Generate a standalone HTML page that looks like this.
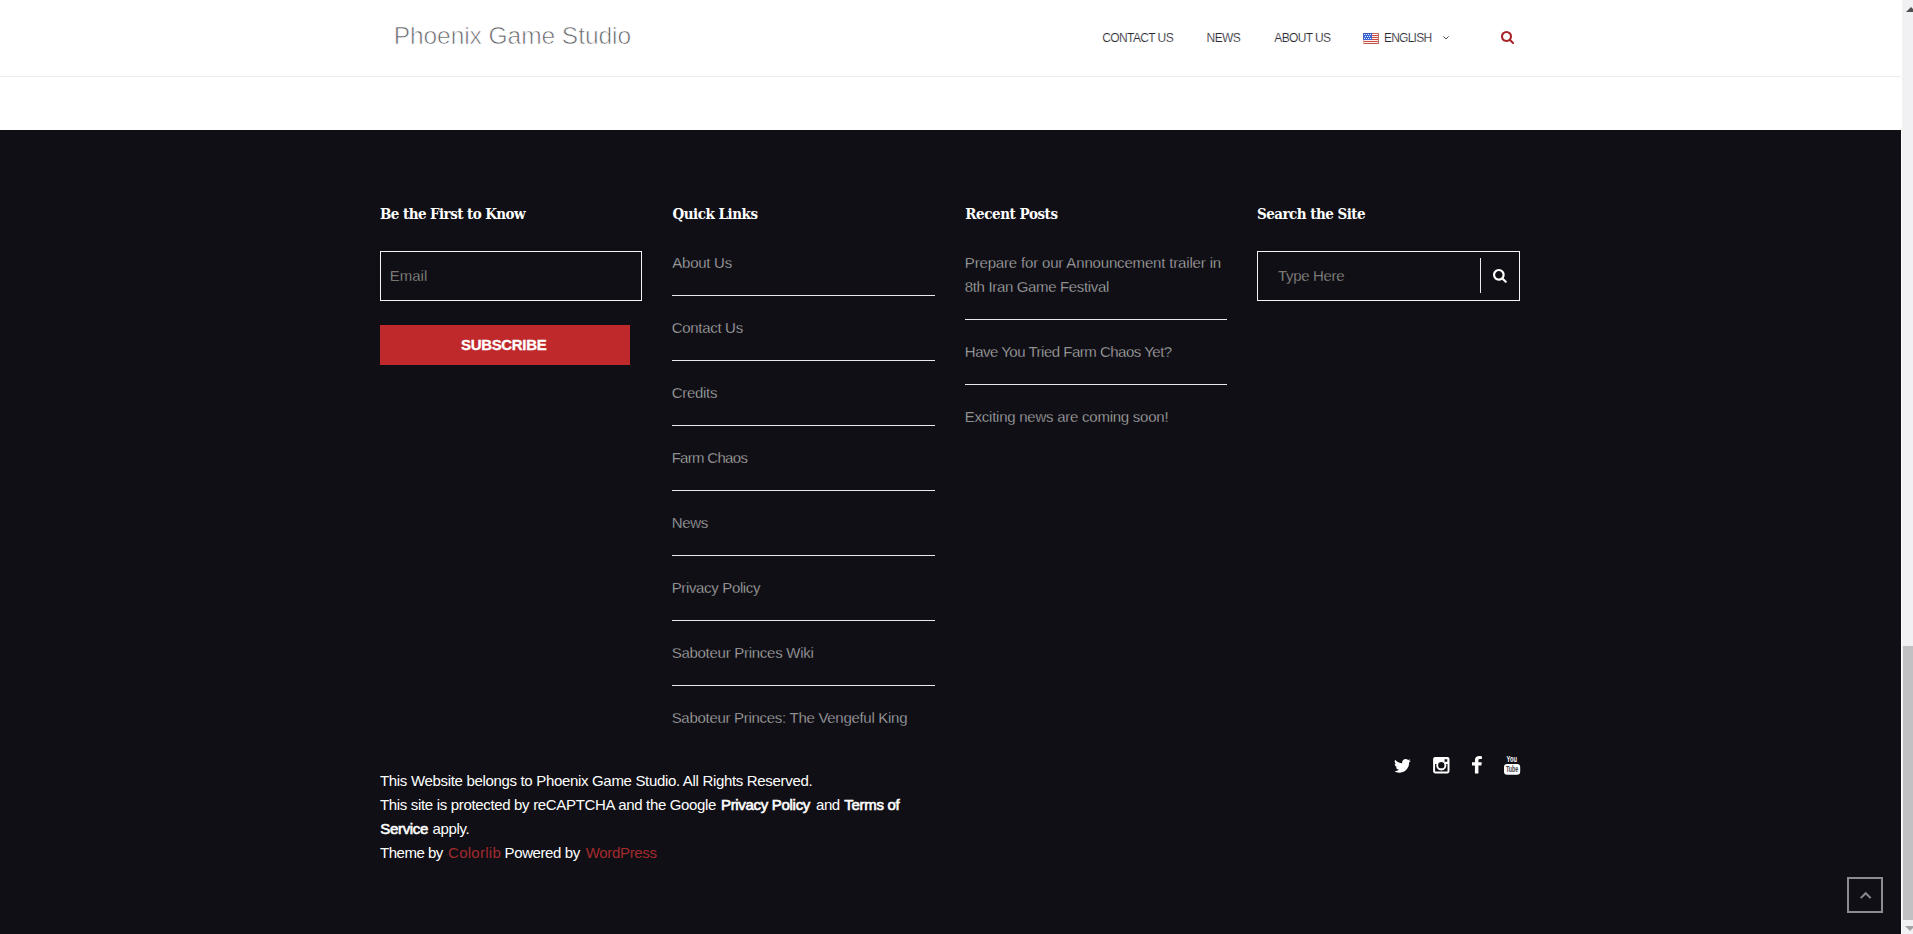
<!DOCTYPE html>
<html lang="en">
<head>
<meta charset="utf-8">
<title>Phoenix Game Studio</title>
<style>
*{box-sizing:border-box;margin:0;padding:0}
html,body{width:1913px;height:934px;overflow:hidden;background:#fff}
body{position:relative;font-family:"Liberation Sans",sans-serif;font-size:15px;color:#fff}
a{color:inherit;text-decoration:none}
.abs{position:absolute}
.tx{position:absolute;white-space:nowrap;display:block}
#header{position:absolute;left:0;top:0;width:1901px;height:77px;background:#fff;border-bottom:1px solid #ebebee}
.logo{font-size:24.5px;line-height:32px;color:#626266;-webkit-text-stroke:0.7px #fff}
.nav{font-size:12px;line-height:16px;color:#2a2a32;text-transform:uppercase;-webkit-text-stroke:0.15px #fff}
#footer{position:absolute;left:0;top:130px;width:1901px;height:804px;background:#100f15}
.wt{font-family:"DejaVu Serif Condensed","DejaVu Serif","Liberation Serif",serif;font-weight:bold;font-size:15px;line-height:20px;color:#fff}
.li{font-size:15px;line-height:24px;color:#bababa;-webkit-text-stroke:0.35px #100f15}
.ph{font-size:15px;line-height:24px;color:#989892;-webkit-text-stroke:0.3px #100f15}
.sub{font-weight:bold;font-size:15px;line-height:20px;color:#fff;-webkit-text-stroke:0.3px #fff}
.cp{font-size:15px;line-height:24px;color:#fff}
.b{font-weight:normal;-webkit-text-stroke:0.6px #fff}
.r{color:#a32a2e}
.hr{position:absolute;height:1px;width:263px;background:#e8e8ee}
#email{left:380px;top:121px;width:262px;height:50px;border:1px solid #f4f4f6}
#subbtn{left:380px;top:195px;width:250px;height:40px;background:#c0292b}
#search{left:1257px;top:121px;width:263px;height:50px;border:1px solid #f4f4f6}
#search i{position:absolute;left:222px;top:6px;width:1px;height:35px;background:#e8e8ee}
svg{position:absolute;display:block;overflow:visible}
#totop{left:1847px;top:747px;width:36px;height:36px;border:2px solid #8b8b92}
#sbar{position:absolute;left:1901px;top:0;width:12px;height:934px;background:#f1f1f3;border-left:1px solid #fff}
#sbar .th{position:absolute;left:1px;top:646px;width:11px;height:274px;background:#c1c1c4}
</style>
</head>
<body>
<header id="header">
<a id="logo" class="tx logo" style="left:393.64px;top:19.5px;letter-spacing:-0.050px">Phoenix Game Studio</a>
<a id="n1" class="tx nav" style="left:1102.20px;top:30px;letter-spacing:-0.600px">CONTACT US</a>
<a id="n2" class="tx nav" style="left:1206.60px;top:30px;letter-spacing:-0.600px">NEWS</a>
<a id="n3" class="tx nav" style="left:1274.33px;top:30px;letter-spacing:-0.643px">ABOUT US</a>
<a id="n4" class="tx nav" style="left:1383.90px;top:30px;letter-spacing:-0.750px">ENGLISH</a>
<!-- header icons -->
<svg style="left:1363px;top:33px" width="16" height="11" viewBox="0 0 16 11" shape-rendering="crispEdges">
<rect width="16" height="11" fill="#fdf1ee"/>
<g fill="#cf4a40"><rect x="9" y="2" width="7" height="1"/><rect x="9" y="4" width="7" height="1"/><rect x="9" y="6" width="7" height="1"/><rect x="0" y="8" width="16" height="1"/></g>
<rect x="9" y="0" width="7" height="1" fill="#c96a5c"/>
<rect x="0" y="10" width="16" height="1" fill="#b9584a"/>
<rect x="15" y="0" width="1" height="11" fill="#bd7560"/>
<rect x="0" y="7" width="1" height="4" fill="#e3a9a0"/>
<rect x="0" y="0" width="9" height="7" fill="#3f68d6"/>
<rect x="0" y="0" width="9" height="1" fill="#3a56ad"/>
<rect x="0" y="0" width="1" height="7" fill="#4a63b8"/>
<g fill="#d6efff"><rect x="1" y="1" width="1" height="1"/><rect x="3" y="1" width="1" height="1"/><rect x="5" y="1" width="1" height="1"/><rect x="7" y="1" width="1" height="1"/><rect x="2" y="3" width="1" height="1"/><rect x="4" y="3" width="1" height="1"/><rect x="6" y="3" width="1" height="1"/><rect x="1" y="5" width="1" height="1"/><rect x="3" y="5" width="1" height="1"/><rect x="5" y="5" width="1" height="1"/><rect x="7" y="5" width="1" height="1"/></g>
</svg>
<svg style="left:1443px;top:36px" width="6" height="4" viewBox="0 0 6 4"><path d="M0.4 0.4 L3 3 L5.6 0.4" fill="none" stroke="#4a4a52" stroke-width="1"/></svg>
<svg style="left:1501.3px;top:30.9px" width="13" height="13" viewBox="0 -1408 1664 1664"><path fill="#a82428" transform="scale(1,-1)" d="M1020.5 387.5Q1152 519 1152.0 704.0Q1152 889 1020.5 1020.5Q889 1152 704.0 1152.0Q519 1152 387.5 1020.5Q256 889 256.0 704.0Q256 519 387.5 387.5Q519 256 704.0 256.0Q889 256 1020.5 387.5ZM1664 -128Q1664 -180 1626.0 -218.0Q1588 -256 1536 -256Q1482 -256 1446 -218L1103 124Q924 0 704 0Q561 0 430.5 55.5Q300 111 205.5 205.5Q111 300 55.5 430.5Q0 561 0.0 704.0Q0 847 55.5 977.5Q111 1108 205.5 1202.5Q300 1297 430.5 1352.5Q561 1408 704.0 1408.0Q847 1408 977.5 1352.5Q1108 1297 1202.5 1202.5Q1297 1108 1352.5 977.5Q1408 847 1408 704Q1408 484 1284 305L1627 -38Q1664 -75 1664 -128Z"/></svg>

</header>

<footer id="footer">
<!-- footer widgets -->
<div id="email" class="abs"></div>
<div id="subbtn" class="abs"></div>
<div class="hr" style="left:672px;top:165px"></div>
<div class="hr" style="left:672px;top:230px"></div>
<div class="hr" style="left:672px;top:295px"></div>
<div class="hr" style="left:672px;top:360px"></div>
<div class="hr" style="left:672px;top:425px"></div>
<div class="hr" style="left:672px;top:490px"></div>
<div class="hr" style="left:672px;top:555px"></div>
<div class="hr" style="left:965px;top:189px;width:262px"></div>
<div class="hr" style="left:965px;top:254px;width:262px"></div>

<div id="search" class="abs"><i></i></div>
<svg style="left:1492.8px;top:138.6px" width="13.8" height="13.8" viewBox="0 -1408 1664 1664"><path fill="#fff" transform="scale(1,-1)" d="M1020.5 387.5Q1152 519 1152.0 704.0Q1152 889 1020.5 1020.5Q889 1152 704.0 1152.0Q519 1152 387.5 1020.5Q256 889 256.0 704.0Q256 519 387.5 387.5Q519 256 704.0 256.0Q889 256 1020.5 387.5ZM1664 -128Q1664 -180 1626.0 -218.0Q1588 -256 1536 -256Q1482 -256 1446 -218L1103 124Q924 0 704 0Q561 0 430.5 55.5Q300 111 205.5 205.5Q111 300 55.5 430.5Q0 561 0.0 704.0Q0 847 55.5 977.5Q111 1108 205.5 1202.5Q300 1297 430.5 1352.5Q561 1408 704.0 1408.0Q847 1408 977.5 1352.5Q1108 1297 1202.5 1202.5Q1297 1108 1352.5 977.5Q1408 847 1408 704Q1408 484 1284 305L1627 -38Q1664 -75 1664 -128Z"/></svg>

<h3 id="t1" class="tx wt" style="left:380.00px;top:73.5px;letter-spacing:-0.568px">Be the First to Know</h3>
<h3 id="t2" class="tx wt" style="left:672.50px;top:73.5px;letter-spacing:-0.477px">Quick Links</h3>
<h3 id="t3" class="tx wt" style="left:965.33px;top:73.5px;letter-spacing:-0.442px">Recent Posts</h3>
<h3 id="t4" class="tx wt" style="left:1256.90px;top:73.5px;letter-spacing:-0.514px">Search the Site</h3>
<span id="em" class="tx ph" style="left:389.72px;top:134px;letter-spacing:0.000px">Email</span>
<span id="sb" class="tx sub" style="left:461.00px;top:205px;letter-spacing:-0.338px">SUBSCRIBE</span>
<a id="q1" class="tx li" style="left:672.30px;top:121px;letter-spacing:-0.257px">About Us</a>
<a id="q2" class="tx li" style="left:671.67px;top:186px;letter-spacing:-0.300px">Contact Us</a>
<a id="q3" class="tx li" style="left:671.67px;top:251px;letter-spacing:-0.285px">Credits</a>
<a id="q4" class="tx li" style="left:671.67px;top:316px;letter-spacing:-0.700px">Farm Chaos</a>
<a id="q5" class="tx li" style="left:671.67px;top:381px;letter-spacing:-0.300px">News</a>
<a id="q6" class="tx li" style="left:671.67px;top:446px;letter-spacing:-0.346px">Privacy Policy</a>
<a id="q7" class="tx li" style="left:671.67px;top:511px;letter-spacing:-0.270px">Saboteur Princes Wiki</a>
<a id="q8" class="tx li" style="left:671.67px;top:576px;letter-spacing:-0.291px">Saboteur Princes: The Vengeful King</a>
<a id="r1" class="tx li" style="left:964.80px;top:121px;letter-spacing:-0.166px">Prepare for our Announcement trailer in</a>
<a id="r1b" class="tx li" style="left:964.80px;top:145px;letter-spacing:-0.343px">8th Iran Game Festival</a>
<a id="r2" class="tx li" style="left:964.80px;top:210px;letter-spacing:-0.497px">Have You Tried Farm Chaos Yet?</a>
<a id="r3" class="tx li" style="left:964.80px;top:275px;letter-spacing:-0.248px">Exciting news are coming soon!</a>
<span id="th" class="tx ph" style="left:1278.00px;top:134px;letter-spacing:-0.337px">Type Here</span>
<span id="c1" class="tx cp" style="left:380.00px;top:639px;letter-spacing:-0.323px">This Website belongs to Phoenix Game Studio. All Rights Reserved.</span>
<span id="c2a" class="tx cp" style="left:380.00px;top:663px;letter-spacing:-0.331px">This site is protected by reCAPTCHA and the Google</span>
<b id="c2b" class="tx cp b" style="left:720.94px;top:663px;letter-spacing:-0.305px">Privacy Policy</b>
<span id="c2c" class="tx cp" style="left:816.00px;top:663px;letter-spacing:-0.450px">and</span>
<b id="c2d" class="tx cp b" style="left:844.34px;top:663px;letter-spacing:-0.321px">Terms of</b>
<b id="c3a" class="tx cp b" style="left:380.33px;top:687px;letter-spacing:-0.345px">Service</b>
<span id="c3b" class="tx cp" style="left:432.50px;top:687px;letter-spacing:-0.360px">apply.</span>
<span id="c4a" class="tx cp" style="left:380.00px;top:711px;letter-spacing:-0.489px">Theme by</span>
<a id="c4b" class="tx cp r" style="left:448.10px;top:711px;letter-spacing:0.257px">Colorlib</a>
<span id="c4c" class="tx cp" style="left:504.60px;top:711px;letter-spacing:-0.400px">Powered by</span>
<a id="c4d" class="tx cp r" style="left:585.78px;top:711px;letter-spacing:-0.337px">WordPress</a>

<!-- social icons -->
<svg style="left:1393.6px;top:628.5px" width="16.8" height="13.7" viewBox="44 -1280 1576 1280"><path fill="#fff" transform="scale(1,-1)" d="M1620 1128Q1553 1030 1458 961Q1459 947 1459 919Q1459 789 1421.0 659.5Q1383 530 1305.5 411.0Q1228 292 1121.0 200.5Q1014 109 863.0 54.5Q712 0 540 0Q269 0 44 145Q79 141 122 141Q347 141 523 279Q418 281 335.0 343.5Q252 406 221 503Q254 498 282 498Q325 498 367 509Q255 532 181.5 620.5Q108 709 108 826V830Q176 792 254 789Q188 833 149.0 904.0Q110 975 110 1058Q110 1146 154 1221Q275 1072 448.5 982.5Q622 893 820 883Q812 921 812 957Q812 1091 906.5 1185.5Q1001 1280 1135 1280Q1275 1280 1371 1178Q1480 1199 1576 1256Q1539 1141 1434 1078Q1527 1088 1620 1128Z"/></svg>
<svg style="left:1432.8px;top:627.2px" width="16.6" height="16.4" viewBox="0 0 16 16">
<path fill="#fff" fill-rule="evenodd" d="M2 0H14A2 2 0 0 1 16 2V14A2 2 0 0 1 14 16H2A2 2 0 0 1 0 14V2A2 2 0 0 1 2 0ZM11.2 2.2V4.6H13.8V2.2ZM1.9 6.8V13.6Q1.9 14.1 2.4 14.1H13.6Q14.1 14.1 14.1 13.6V6.8H12.7A4.9 4.9 0 1 1 3.3 6.8ZM8 4.9A3.1 3.1 0 1 0 8 11.1A3.1 3.1 0 1 0 8 4.9Z"/>
</svg>
<svg style="left:1471.8px;top:626.1px" width="9.9" height="17.4" viewBox="95 -1536 864 1664" preserveAspectRatio="none"><path fill="#fff" transform="scale(1,-1)" d="M959 1524V1260H802Q716 1260 686.0 1224.0Q656 1188 656 1116V927H949L910 631H656V-128H350V631H95V927H350V1145Q350 1331 454.0 1433.5Q558 1536 731 1536Q878 1536 959 1524Z"/></svg>
<svg style="left:1503.6px;top:626.2px" width="16.2" height="18.7" viewBox="0 0 16.4 18.7" preserveAspectRatio="none">
<text x="7.8" y="6.3" text-anchor="middle" font-family="Liberation Sans, sans-serif" font-weight="bold" font-size="8.6" fill="#fff" textLength="10.5" lengthAdjust="spacingAndGlyphs">You</text>
<rect x="0" y="8" width="16.4" height="10.7" rx="3.2" fill="#fff"/>
<text x="8.2" y="16.4" text-anchor="middle" font-family="Liberation Sans, sans-serif" font-weight="bold" font-size="8.6" fill="#3c3b42" textLength="12.4" lengthAdjust="spacingAndGlyphs">Tube</text>
</svg>

<div id="totop" class="abs">
<svg style="left:11px;top:13px" width="11.4" height="6.8" viewBox="0 0 11.4 6.8"><path d="M0.7 6.1L5.7 1.2L10.7 6.1" fill="none" stroke="#8b8b92" stroke-width="1.9"/></svg>
</div>

</footer>

<div id="sbar">
<div class="th"></div>
<svg style="left:4px;top:7px" width="10" height="5" viewBox="0 0 10 5"><path d="M0 5L5 0L10 5Z" fill="#505050"/></svg>
<svg style="left:3px;top:926px" width="10" height="5" viewBox="0 0 10 5"><path d="M0 0L5 5L10 0Z" fill="#a3a3a3"/></svg>
</div>
</body>
</html>
